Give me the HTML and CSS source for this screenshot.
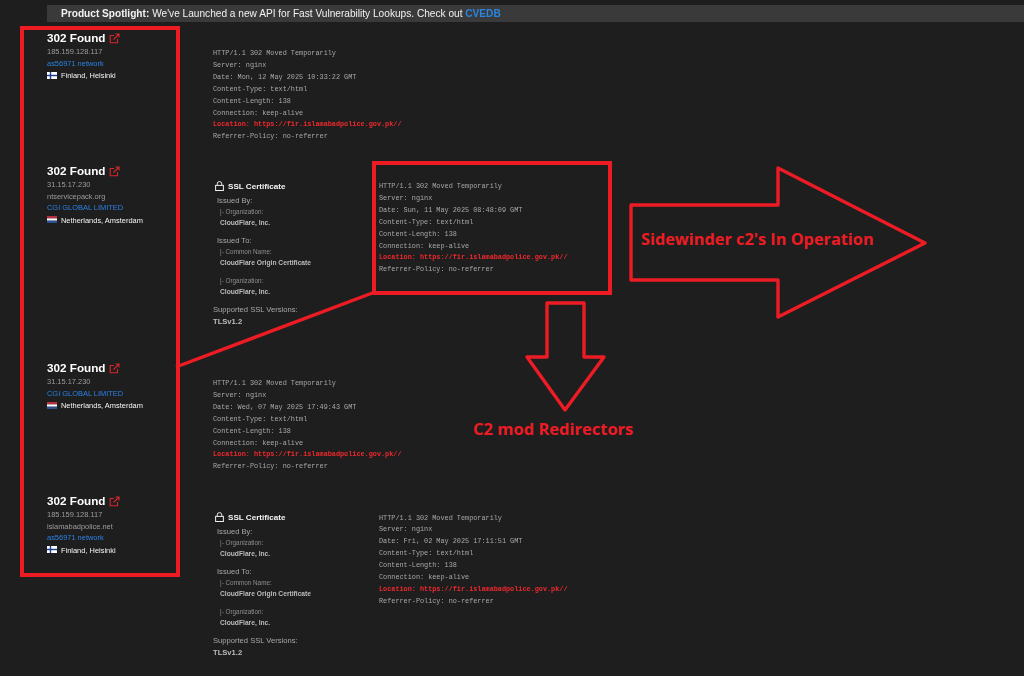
FILE: index.html
```html
<!DOCTYPE html>
<html lang="en">
<head>
<meta charset="utf-8">
<title>Search results</title>
<link rel="stylesheet" href="styles.css">
</head>
<body>
<svg width="0" height="0" class="defs" aria-hidden="true">
  <symbol id="ext" viewBox="0 0 11 11"><path d="M8.5 6v3.8H1.2V2.5H5M4.5 6.5 10 1M6.5 1H10v3.5" fill="none" stroke="currentColor" stroke-width="1.1"/></symbol>
  <symbol id="fi" viewBox="0 0 10 7"><rect width="10" height="7" fill="#fff"/><rect y="2.8" width="10" height="1.4" fill="#1b3f8f"/><rect x="2.8" width="1.4" height="7" fill="#1b3f8f"/></symbol>
  <symbol id="nl" viewBox="0 0 10 7"><rect width="10" height="2.4" fill="#b5303c"/><rect y="2.4" width="10" height="2.3" fill="#fff"/><rect y="4.7" width="10" height="2.3" fill="#2b4f8f"/></symbol>
  <symbol id="lock" viewBox="0 0 9 10"><path d="M2.2 4.4V2.9a2.3 2.3 0 0 1 4.6 0v1.5" fill="none" stroke="#eee" stroke-width="1"/><rect x=".6" y="4.4" width="7.8" height="5.1" fill="none" stroke="#eee"/></symbol>
</svg>

<div class="banner"><b>Product Spotlight:</b> We've Launched a new API for Fast Vulnerability Lookups. Check out <a href="#">CVEDB</a></div>

<main class="results">
  <section class="row row-short">
    <div class="host">
      <h2>302 Found <svg class="ext"><use href="#ext"/></svg></h2>
      <div class="meta">185.159.128.117</div>
      <div class="link">as56971 network</div>
      <div class="place"><svg class="flag"><use href="#fi"/></svg>Finland, Helsinki</div>
    </div>
    <div class="banner-text wide">
      <div>HTTP/1.1 302 Moved Temporarily</div>
      <div>Server: nginx</div>
      <div>Date: Mon, 12 May 2025 10:33:22 GMT</div>
      <div>Content-Type: text/html</div>
      <div>Content-Length: 138</div>
      <div>Connection: keep-alive</div>
      <div class="loc">Location: https://fir.islamabadpolice.gov.pk//</div>
      <div>Referrer-Policy: no-referrer</div>
    </div>
  </section>

  <section class="row row-tall">
    <div class="host">
      <h2>302 Found <svg class="ext"><use href="#ext"/></svg></h2>
      <div class="meta">31.15.17.230</div>
      <div class="meta">ntservicepack.org</div>
      <div class="link">CGI GLOBAL LIMITED</div>
      <div class="place"><svg class="flag"><use href="#nl"/></svg>Netherlands, Amsterdam</div>
    </div>
    <div class="ssl">
      <h3><svg class="lock"><use href="#lock"/></svg>SSL Certificate</h3>
      <div class="sub">Issued By:</div>
      <div class="key">|- Organization:</div>
      <div class="val">CloudFlare, Inc.</div>
      <div class="sub gap">Issued To:</div>
      <div class="key">|- Common Name:</div>
      <div class="val">CloudFlare Origin Certificate</div>
      <div class="key gap">|- Organization:</div>
      <div class="val">CloudFlare, Inc.</div>
      <div class="ver">Supported SSL Versions:</div>
      <div class="tls">TLSv1.2</div>
    </div>
    <div class="banner-text">
      <div>HTTP/1.1 302 Moved Temporarily</div>
      <div>Server: nginx</div>
      <div>Date: Sun, 11 May 2025 08:48:09 GMT</div>
      <div>Content-Type: text/html</div>
      <div>Content-Length: 138</div>
      <div>Connection: keep-alive</div>
      <div class="loc">Location: https://fir.islamabadpolice.gov.pk//</div>
      <div>Referrer-Policy: no-referrer</div>
    </div>
  </section>

  <section class="row row-short">
    <div class="host">
      <h2>302 Found <svg class="ext"><use href="#ext"/></svg></h2>
      <div class="meta">31.15.17.230</div>
      <div class="link">CGI GLOBAL LIMITED</div>
      <div class="place"><svg class="flag"><use href="#nl"/></svg>Netherlands, Amsterdam</div>
    </div>
    <div class="banner-text wide">
      <div>HTTP/1.1 302 Moved Temporarily</div>
      <div>Server: nginx</div>
      <div>Date: Wed, 07 May 2025 17:49:43 GMT</div>
      <div>Content-Type: text/html</div>
      <div>Content-Length: 138</div>
      <div>Connection: keep-alive</div>
      <div class="loc">Location: https://fir.islamabadpolice.gov.pk//</div>
      <div>Referrer-Policy: no-referrer</div>
    </div>
  </section>

  <section class="row row-last">
    <div class="host">
      <h2>302 Found <svg class="ext"><use href="#ext"/></svg></h2>
      <div class="meta">185.159.128.117</div>
      <div class="meta">islamabadpolice.net</div>
      <div class="link">as56971 network</div>
      <div class="place"><svg class="flag"><use href="#fi"/></svg>Finland, Helsinki</div>
    </div>
    <div class="ssl">
      <h3><svg class="lock"><use href="#lock"/></svg>SSL Certificate</h3>
      <div class="sub">Issued By:</div>
      <div class="key">|- Organization:</div>
      <div class="val">CloudFlare, Inc.</div>
      <div class="sub gap">Issued To:</div>
      <div class="key">|- Common Name:</div>
      <div class="val">CloudFlare Origin Certificate</div>
      <div class="key gap">|- Organization:</div>
      <div class="val">CloudFlare, Inc.</div>
      <div class="ver">Supported SSL Versions:</div>
      <div class="tls">TLSv1.2</div>
    </div>
    <div class="banner-text">
      <div>HTTP/1.1 302 Moved Temporarily</div>
      <div>Server: nginx</div>
      <div>Date: Fri, 02 May 2025 17:11:51 GMT</div>
      <div>Content-Type: text/html</div>
      <div>Content-Length: 138</div>
      <div>Connection: keep-alive</div>
      <div class="loc">Location: https://fir.islamabadpolice.gov.pk//</div>
      <div>Referrer-Policy: no-referrer</div>
    </div>
  </section>
</main>

<svg class="marks" viewBox="0 0 1024 676" aria-hidden="true">
  <g class="mark-thick">
    <rect x="22" y="28" width="156" height="547"/>
    <rect x="374" y="163" width="236" height="130"/>
  </g>
  <g class="mark-thin">
    <path d="M176 367 375 292"/>
    <path d="M631 205H778V168L925 243 778 317V280H631Z"/>
    <path d="M547 303H584V357H604L565 410 527 357H547Z"/>
  </g>
</svg>
<div class="note note-side">Sidewinder c2's In Operation</div>
<div class="note note-down">C2 mod Redirectors</div>
</body>
</html>
```

FILE: styles.css
```css
html, body {
  margin: 0;
  padding: 0;
}
body {
  position: relative;
  width: 1024px;
  height: 676px;
  overflow: hidden;
  background: #1e1e1e;
  color: #fff;
  font-family: "Liberation Sans", Arial, sans-serif;
}
.defs {
  position: absolute;
}
.banner {
  margin: 5px 0 0 47px;
  height: 17px;
  padding-left: 14px;
  background: #3a3a3a;
  font-size: 10.15px;
  line-height: 17px;
  color: #f2f2f2;
  filter: blur(.25px);
}
.banner a {
  color: #2a85e0;
  font-weight: bold;
  text-decoration: none;
}
.results {
  display: flex;
  flex-direction: column;
  margin-top: 8px;
  filter: blur(.25px);
}
.row {
  display: flex;
  padding-left: 47px;
}
.row-short {
  height: 133px;
}
.row-tall {
  height: 197px;
}
.host {
  flex: 0 0 166px;
}
.host h2 {
  display: flex;
  align-items: center;
  gap: 4px;
  margin: 0;
  height: 16px;
  font-size: 11.7px;
  font-weight: bold;
  line-height: 16px;
  color: #fff;
}
.ext {
  width: 11px;
  height: 11px;
  color: #d8262c;
}
.meta, .link {
  font-size: 7.45px;
  line-height: 11.5px;
  color: #9c9c9c;
}
.link {
  color: #2a82e4;
}
.place {
  display: flex;
  align-items: center;
  gap: 4px;
  margin-top: 1px;
  font-size: 7.45px;
  line-height: 12px;
  color: #f4f4f4;
}
.flag {
  width: 10px;
  height: 7px;
  margin-bottom: 2px;
}
.ssl {
  flex: 0 0 166px;
  padding-top: 17px;
  font-size: 7.6px;
  color: #a8a8a8;
}
.row-last .ssl {
  padding-top: 18px;
}
.ssl h3 {
  display: flex;
  align-items: center;
  gap: 4px;
  margin: 0 0 3px 2px;
  height: 12px;
  font-size: 8.1px;
  font-weight: bold;
  color: #f4f4f4;
}
.lock {
  width: 9px;
  height: 10px;
}
.sub {
  margin-left: 4px;
  line-height: 12px;
}
.key {
  margin-left: 7px;
  font-size: 6.35px;
  line-height: 10px;
  color: #8e8e8e;
}
.val {
  margin-left: 7px;
  font-size: 6.7px;
  font-weight: bold;
  line-height: 11px;
  color: #bcbcbc;
}
.sub.gap {
  margin-top: 7px;
}
.key.gap {
  margin-top: 8px;
}
.ver {
  margin-top: 7px;
  line-height: 12px;
}
.tls {
  font-weight: bold;
  line-height: 12px;
  color: #bcbcbc;
}
.banner-text {
  padding-top: 18px;
  font-family: "Liberation Mono", "DejaVu Sans Mono", monospace;
  font-size: 6.83px;
  line-height: 11.9px;
  color: #a8a8a8;
}
.row-last .banner-text {
  padding-top: 19.5px;
}
.loc {
  font-weight: bold;
  color: #f0282d;
}
.marks {
  position: absolute;
  left: 0;
  top: 0;
  width: 1024px;
  height: 676px;
  pointer-events: none;
}
.marks g {
  fill: none;
  stroke: #ed1c24;
}
.mark-thick {
  stroke-width: 4;
}
.mark-thin {
  stroke-width: 3.4;
  stroke-linejoin: round;
}
.note {
  position: absolute;
  font-family: "Open Sans", "Noto Sans", sans-serif;
  font-weight: bold;
  color: #ed1c24;
  white-space: nowrap;
}
.note-side {
  left: 641px;
  top: 229px;
  font-size: 16.3px;
  line-height: 20px;
}
.note-down {
  left: 473px;
  top: 419px;
  font-size: 16.5px;
  line-height: 20px;
}
```
